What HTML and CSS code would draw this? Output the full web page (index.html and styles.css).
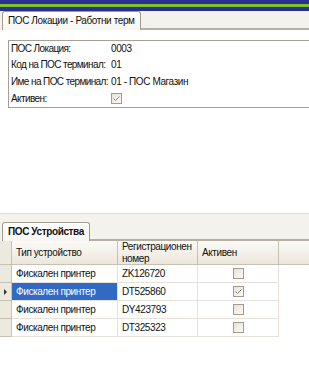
FILE: index.html
```html
<!DOCTYPE html>
<html lang="bg">
<head>
    <meta charset="UTF-8">
    <title>ПОС Локации</title>
    <link rel="stylesheet" href="styles.css">
</head>
<body>
    <div class="titlebar"></div>

    <div class="tabstrip top">
        <div class="tab">ПОС Локации - Работни терм</div>
        <div class="tab-fill"></div>
    </div>

    <div class="panel">
        <div class="group">
            <div class="row first"><span class="lbl">ПОС Локация:</span><span>0003</span></div>
            <div class="row"><span class="lbl">Код на ПОС терминал:</span><span>01</span></div>
            <div class="row"><span class="lbl">Име на ПОС терминал:</span><span>01 - ПОС Магазин</span></div>
            <div class="row"><span class="lbl">Активен:</span>
                <span class="chk"><svg width="9" height="9" viewBox="0 0 9 9"><polyline points="1.5,4.5 3.5,6.5 7.5,2.5" fill="none" stroke="#8a8178" stroke-width="1"/></svg></span>
            </div>
        </div>
    </div>

    <div class="tabstrip bottom">
        <div class="tab bold">ПОС Устройства</div>
        <div class="tab-fill"></div>
    </div>

    <div class="grid">
        <div class="hd rh"></div>
        <div class="hd">Тип устройство</div>
        <div class="hd">Регистрационен<br>номер</div>
        <div class="hd">Активен</div>
        <div class="hd last"></div>

        <div class="rh"></div>
        <div class="cell">Фискален принтер</div>
        <div class="cell">ZK126720</div>
        <div class="cell center"><span class="chk"></span></div>
        <div class="blank"></div>

        <div class="rh"><span class="arrow"></span></div>
        <div class="cell sel">Фискален принтер</div>
        <div class="cell">DT525860</div>
        <div class="cell center"><span class="chk"><svg width="9" height="9" viewBox="0 0 9 9"><polyline points="1.5,4.5 3.5,6.5 7.5,2.5" fill="none" stroke="#8a8178" stroke-width="1"/></svg></span></div>
        <div class="blank"></div>

        <div class="rh"></div>
        <div class="cell">Фискален принтер</div>
        <div class="cell">DY423793</div>
        <div class="cell center"><span class="chk"></span></div>
        <div class="blank"></div>

        <div class="rh"></div>
        <div class="cell">Фискален принтер</div>
        <div class="cell">DT325323</div>
        <div class="cell center"><span class="chk"></span></div>
        <div class="blank"></div>
    </div>
</body>
</html>
```

FILE: styles.css
```css
body {
    margin: 0;
    background: white;
    font-family: "Liberation Sans", Arial, sans-serif;
    font-size: 10px;
    letter-spacing: -0.4px;
    color: #111;
    overflow: hidden;
    white-space: nowrap;
}
.titlebar {
    height: 11px;
    background: linear-gradient(#2b3090 0, #2b3090 4px, #7cc22a 4px, #7cc22a 7px, #2b3090 7px);
}
.tabstrip {
    display: flex;
    align-items: flex-end;
    background: #f4f2ed;
}
.tabstrip.top {
    height: 19px;
}
.tabstrip.bottom {
    margin-top: 105px;
    height: 27px;
    border-top: 1px solid #e2ddd4;
}
.tab {
    height: 18px;
    line-height: 18px;
    margin-left: 2px;
    padding: 0 5px;
    border: 1px solid #a39b8f;
    border-bottom: none;
    border-radius: 3px 3px 0 0;
    background: linear-gradient(#ffffff, #f7f6f2);
}
.tab.bold {
    font-weight: bold;
}
.tab-fill {
    flex: 1;
    border-bottom: 2px solid #b8afa3;
}
.panel {
    padding: 10px 0 0 8px;
}
.group {
    border: 1px solid #a89f94;
    border-right: none;
    margin-right: -10px;
    height: 66px;
}
.row {
    display: flex;
    align-items: center;
    height: 17px;
    padding-left: 2px;
}
.row.first {
    height: 15px;
}
.lbl {
    width: 100px;
    letter-spacing: -0.6px;
}
.chk {
    display: inline-flex;
    align-items: center;
    justify-content: center;
    width: 9px;
    height: 9px;
    border: 1px solid #a8998a;
    background: linear-gradient(135deg, #e6e2d8, #fbfaf7);
}
.grid {
    display: grid;
    grid-template-columns: 12px 106px 80px 81px 1fr;
    grid-template-rows: 24px repeat(4, 18px);
}
.hd {
    display: flex;
    align-items: center;
    padding-left: 4px;
    background: linear-gradient(#fbfaf6, #ebe7dc);
    border-right: 1px solid #c7c0b4;
    border-bottom: 1px solid #c7c0b4;
    line-height: 12px;
    overflow: hidden;
}
.hd.rh {
    padding: 0;
}
.hd.last {
    border-right: none;
}
.rh {
    background: #ece9df;
    border-right: 1px solid #c7c0b4;
    border-bottom: 1px solid #c7c0b4;
    display: flex;
    align-items: center;
    justify-content: center;
}
.arrow {
    width: 0;
    height: 0;
    border-top: 3px solid transparent;
    border-bottom: 3px solid transparent;
    border-left: 3px solid #333;
}
.cell {
    display: flex;
    align-items: center;
    padding-left: 4px;
    border-right: 1px solid #e6e2da;
    border-bottom: 1px solid #e6e2da;
}
.cell.center {
    justify-content: center;
    padding-left: 0;
}
.cell.sel {
    background: #316ac5;
    color: white;
}
.blank {
    background: white;
}
```
